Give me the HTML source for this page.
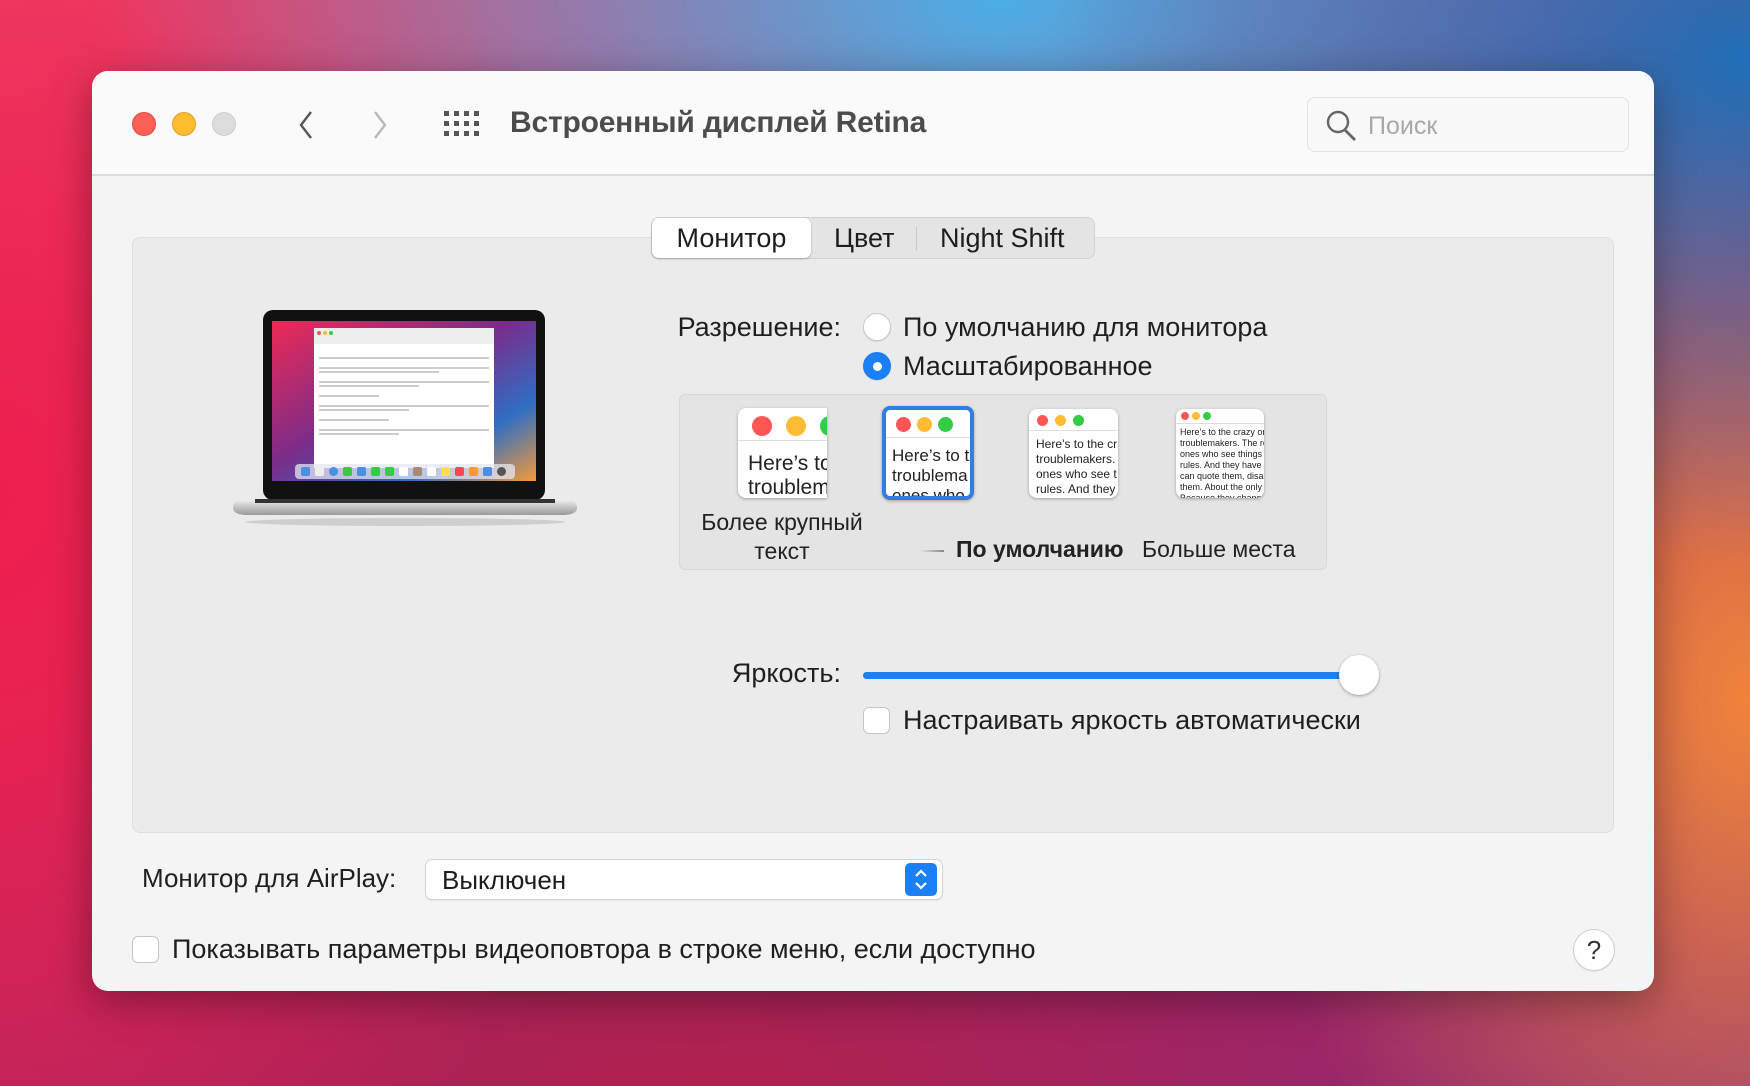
<!DOCTYPE html>
<html><head><meta charset="utf-8"><style>
*{margin:0;padding:0;box-sizing:border-box}
body{width:1750px;height:1086px;overflow:hidden;position:relative;font-family:"Liberation Sans","DejaVu Sans",sans-serif;color:#1d1d1d;
background:
radial-gradient(ellipse 700px 500px at 1750px 60px,#1f6fb8 0%,rgba(31,111,184,0) 100%),
radial-gradient(ellipse 500px 700px at 1750px 700px,#f0843a 0%,rgba(240,132,58,0) 100%),
radial-gradient(ellipse 900px 500px at 1000px 0px,#4aaee6 0%,rgba(74,174,230,0) 100%),
radial-gradient(ellipse 600px 900px at 0px 500px,#ee1f4f 0%,rgba(238,31,79,0) 100%),
radial-gradient(ellipse 1200px 400px at 700px 1086px,#b0204e 0%,rgba(176,32,78,0) 100%),
linear-gradient(160deg,#f0486c 0%,#d82a5c 40%,#a02a70 70%,#7a2a8a 100%);}
.win{position:absolute;left:92px;top:71px;width:1562px;height:920px;background:#f4f4f4;border-radius:16px;box-shadow:0 10px 40px rgba(0,0,0,.35);overflow:hidden}
.tb{position:absolute;left:0;top:0;width:100%;height:105px;background:#fafafa;border-bottom:2px solid #dcdcdc}
.tl{position:absolute;top:41px;width:24px;height:24px;border-radius:50%}
.title{position:absolute;left:418px;top:35px;font-size:30px;font-weight:bold;color:#4c4c4c;letter-spacing:-.2px}
.search{position:absolute;left:1215px;top:26px;width:322px;height:55px;border:1px solid #e2e2e2;border-radius:8px;background:#f8f8f8}
.search span{position:absolute;left:60px;top:14px;font-size:25px;color:#a8a8a8}
.panel{position:absolute;left:40px;top:166px;width:1482px;height:596px;background:#ebebeb;border:1px solid #dedede;border-radius:8px}
.tabs{position:absolute;left:559px;top:146px;width:444px;height:42px;background:#e4e4e4;border:1px solid #d2d2d2;border-radius:8px;font-size:27px}
.tabs .sel{position:absolute;left:0;top:0;width:159px;height:40px;background:#fff;border-radius:7px;box-shadow:0 1px 2px rgba(0,0,0,.25);text-align:center;line-height:40px}
.tabs span{position:absolute;top:0;line-height:40px}
.lbl{position:absolute;font-size:27px;color:#1f1f1f;white-space:nowrap}
.radio{position:absolute;width:28px;height:28px;border-radius:50%;background:#fff;border:1px solid #c8c8c8;box-shadow:0 1px 1px rgba(0,0,0,.1)}
.radio.on{background:#1b7ff5;border-color:#1b7ff5}
.radio.on:after{content:"";position:absolute;left:9px;top:9px;width:9px;height:9px;border-radius:50%;background:#fff}
.opts{position:absolute;left:587px;top:323px;width:648px;height:176px;background:#e4e4e4;border:1px solid #d8d8d8;border-radius:6px}
.th{position:absolute;background:#fff;border-radius:8px;overflow:hidden;box-shadow:0 1px 3px rgba(0,0,0,.3)}
.th .bar{position:absolute;left:0;top:0;width:100%;border-bottom:1px solid #ddd}
.th .d{position:absolute;border-radius:50%}
.th .t{position:absolute;left:10px;color:#222;white-space:nowrap}
.cap{position:absolute;font-size:23px;color:#222;text-align:center;white-space:nowrap}
.cb{position:absolute;width:27px;height:27px;background:#fff;border:1px solid #c5c5c5;border-radius:6px}
</style></head><body>
<div class="win">
 <div class="tb">
  <div class="tl" style="left:40px;background:#fe5f57;border:1px solid #e2463f"></div>
  <div class="tl" style="left:80px;background:#febc2e;border:1px solid #dea123"></div>
  <div class="tl" style="left:120px;background:#dcdcdc;border:1px solid #cfcfcf"></div>
  <svg style="position:absolute;left:202px;top:38px" width="24" height="32"><path d="M17 3 L7 16 L17 29" stroke="#555" stroke-width="2.4" fill="none"/></svg>
  <svg style="position:absolute;left:276px;top:38px" width="24" height="32"><path d="M7 3 L17 16 L7 29" stroke="#b8b8b8" stroke-width="2.4" fill="none"/></svg>
  <svg style="position:absolute;left:352px;top:40px" width="36" height="28" fill="#555">
   <g><rect x="0" y="0" width="5" height="5"/><rect x="10" y="0" width="5" height="5"/><rect x="20" y="0" width="5" height="5"/><rect x="30" y="0" width="5" height="5"/>
   <rect x="0" y="10" width="5" height="5"/><rect x="10" y="10" width="5" height="5"/><rect x="20" y="10" width="5" height="5"/><rect x="30" y="10" width="5" height="5"/>
   <rect x="0" y="20" width="5" height="5"/><rect x="10" y="20" width="5" height="5"/><rect x="20" y="20" width="5" height="5"/><rect x="30" y="20" width="5" height="5"/></g></svg>
  <div class="title">Встроенный дисплей Retina</div>
  <div class="search"><svg style="position:absolute;left:16px;top:11px" width="34" height="34"><circle cx="14" cy="13" r="10" stroke="#666" stroke-width="2.4" fill="none"/><path d="M21 21 L31 31" stroke="#666" stroke-width="2.8"/></svg><span>Поиск</span></div>
 </div>
 <div class="panel"></div>
 <div class="tabs"><div class="sel">Монитор</div><span style="left:182px">Цвет</span><div style="position:absolute;left:264px;top:9px;width:1px;height:24px;background:#c8c8c8"></div><span style="left:288px">Night Shift</span></div>

 <!-- laptop -->
 <svg style="position:absolute;left:133px;top:237px" width="364" height="220">
  <defs><linearGradient id="sc" x1="0" y1="0" x2="1" y2="1"><stop offset="0" stop-color="#ee2a55"/><stop offset=".45" stop-color="#7a2c8a"/><stop offset=".75" stop-color="#2f6ec4"/><stop offset="1" stop-color="#f39a3a"/></linearGradient>
  <linearGradient id="base" x1="0" y1="0" x2="0" y2="1"><stop offset="0" stop-color="#e6e6e6"/><stop offset="1" stop-color="#9a9a9a"/></linearGradient></defs>
  <rect x="38" y="2" width="282" height="190" rx="10" fill="#111"/>
  <rect x="47" y="13" width="264" height="160" fill="url(#sc)"/>
  <rect x="89" y="20" width="180" height="140" fill="#fff"/>
  <rect x="89" y="20" width="180" height="16" fill="#eee"/>
  <circle cx="94" cy="25" r="2" fill="#f55"/><circle cx="100" cy="25" r="2" fill="#fb3"/><circle cx="106" cy="25" r="2" fill="#3c4"/>
  <g stroke="#999" stroke-width="1"><path d="M94 50h170M94 60h170M94 64h120M94 74h170M94 78h100M94 88h60M94 98h170M94 102h90M94 112h70M94 122h170M94 126h80"/></g>
  <rect x="70" y="156" width="220" height="15" rx="4" fill="rgba(230,230,240,.75)"/>
  <g fill="#4a90e2"><rect x="76" y="159" width="9" height="9" rx="2"/><rect x="90" y="159" width="9" height="9" rx="2" fill="#eee"/><rect x="104" y="159" width="9" height="9" rx="5"/><rect x="118" y="159" width="9" height="9" rx="2" fill="#3c4"/><rect x="132" y="159" width="9" height="9" rx="2"/><rect x="146" y="159" width="9" height="9" rx="2" fill="#3c4"/><rect x="160" y="159" width="9" height="9" rx="2" fill="#3c4"/><rect x="174" y="159" width="9" height="9" rx="2" fill="#fff"/><rect x="188" y="159" width="9" height="9" rx="2" fill="#a87"/><rect x="202" y="159" width="9" height="9" rx="2" fill="#fff"/><rect x="216" y="159" width="9" height="9" rx="2" fill="#fd5"/><rect x="230" y="159" width="9" height="9" rx="2" fill="#f45"/><rect x="244" y="159" width="9" height="9" rx="2" fill="#f93"/><rect x="258" y="159" width="9" height="9" rx="2"/><rect x="272" y="159" width="9" height="9" rx="5" fill="#555"/></g>
  <path d="M12 193 H346 Q352 193 352 200 Q352 206 340 207 H20 Q8 206 8 200 Q8 193 12 193Z" fill="url(#base)"/>
  <rect x="30" y="191" width="300" height="4" fill="#333"/>
  <ellipse cx="180" cy="214" rx="160" ry="4" fill="rgba(0,0,0,.12)"/>
 </svg>

 <div class="lbl" style="right:813px;top:241px">Разрешение:</div>
 <div class="radio" style="left:771px;top:242px"></div>
 <div class="lbl" style="left:811px;top:241px">По умолчанию для монитора</div>
 <div class="radio on" style="left:771px;top:281px"></div>
 <div class="lbl" style="left:811px;top:280px">Масштабированное</div>

 <div class="opts">
  <div class="th" style="left:58px;top:13px;width:89px;height:90px;border-radius:8px 0 0 8px"><div class="bar" style="height:33px"></div>
   <div class="d" style="left:14px;top:8px;width:20px;height:20px;background:#f55"></div><div class="d" style="left:48px;top:8px;width:20px;height:20px;background:#fb3"></div><div class="d" style="left:82px;top:8px;width:20px;height:20px;background:#3c4"></div>
   <div class="t" style="top:44px;font-size:21px;line-height:24px">Here’s to<br>troublem</div></div>
  <div class="th" style="left:202px;top:11px;width:92px;height:94px;border:4px solid #2f7ee0"><div class="bar" style="height:28px"></div>
   <div class="d" style="left:10px;top:7px;width:15px;height:15px;background:#f55"></div><div class="d" style="left:31px;top:7px;width:15px;height:15px;background:#fb3"></div><div class="d" style="left:52px;top:7px;width:15px;height:15px;background:#3c4"></div>
   <div class="t" style="left:6px;top:36px;font-size:17px;line-height:20px">Here’s to t<br>troublema<br>ones who</div></div>
  <div class="th" style="left:349px;top:14px;width:89px;height:89px"><div class="bar" style="height:22px"></div>
   <div class="d" style="left:8px;top:6px;width:11px;height:11px;background:#f55"></div><div class="d" style="left:26px;top:6px;width:11px;height:11px;background:#fb3"></div><div class="d" style="left:44px;top:6px;width:11px;height:11px;background:#3c4"></div>
   <div class="t" style="left:7px;top:28px;font-size:12px;line-height:15px">Here’s to the cr<br>troublemakers.<br>ones who see t<br>rules. And they</div></div>
  <div class="th" style="left:496px;top:14px;width:88px;height:89px"><div class="bar" style="height:15px"></div>
   <div class="d" style="left:5px;top:3px;width:8px;height:8px;background:#f55"></div><div class="d" style="left:16px;top:3px;width:8px;height:8px;background:#fb3"></div><div class="d" style="left:27px;top:3px;width:8px;height:8px;background:#3c4"></div>
   <div class="t" style="left:4px;top:18px;font-size:9px;line-height:11px">Here’s to the crazy one<br>troublemakers. The rou<br>ones who see things dif<br>rules. And they have no<br>can quote them, disagr<br>them. About the only th<br>Because they change t</div></div>
  <div class="cap" style="left:10px;top:113px;width:184px;line-height:29px">Более крупный<br>текст</div>
  <div style="position:absolute;left:240px;top:155px;width:24px;height:2px;background:linear-gradient(90deg,#e4e4e4,#888)"></div>
  <div class="cap" style="left:276px;top:141px;font-weight:bold">По умолчанию</div>
  <div class="cap" style="left:462px;top:141px">Больше места</div>
 </div>

 <div class="lbl" style="right:813px;top:587px">Яркость:</div>
 <div style="position:absolute;left:771px;top:601px;width:500px;height:7px;border-radius:4px;background:#1b7ff5"></div>
 <div style="position:absolute;left:1247px;top:584px;width:40px;height:40px;border-radius:50%;background:#fff;box-shadow:0 1px 3px rgba(0,0,0,.35)"></div>
 <div class="cb" style="left:771px;top:636px"></div>
 <div class="lbl" style="left:811px;top:634px">Настраивать яркость автоматически</div>

 <div class="lbl" style="left:50px;top:792px;font-size:26px">Монитор для AirPlay:</div>
 <div style="position:absolute;left:334px;top:789px;width:516px;height:39px;background:#fff;border-radius:6px;box-shadow:0 0 0 1px #d4d4d4,0 1px 2px rgba(0,0,0,.15)"><span style="position:absolute;left:16px;top:5px;font-size:26px">Выключен</span>
  <div style="position:absolute;right:5px;top:3px;width:32px;height:33px;background:#1b7ff5;border-radius:5px"><svg width="32" height="33"><path d="M11 13 L16 8 L21 13 M11 20 L16 25 L21 20" stroke="#fff" stroke-width="2.2" fill="none"/></svg></div></div>

 <div class="cb" style="left:40px;top:865px"></div>
 <div class="lbl" style="left:80px;top:863px">Показывать параметры видеоповтора в строке меню, если доступно</div>
 <div style="position:absolute;left:1482px;top:859px;width:40px;height:40px;border-radius:50%;background:#fff;box-shadow:0 0 0 1px #d0d0d0,0 1px 2px rgba(0,0,0,.2);text-align:center;line-height:40px;font-size:26px;color:#333">?</div>
</div>
</body></html>
